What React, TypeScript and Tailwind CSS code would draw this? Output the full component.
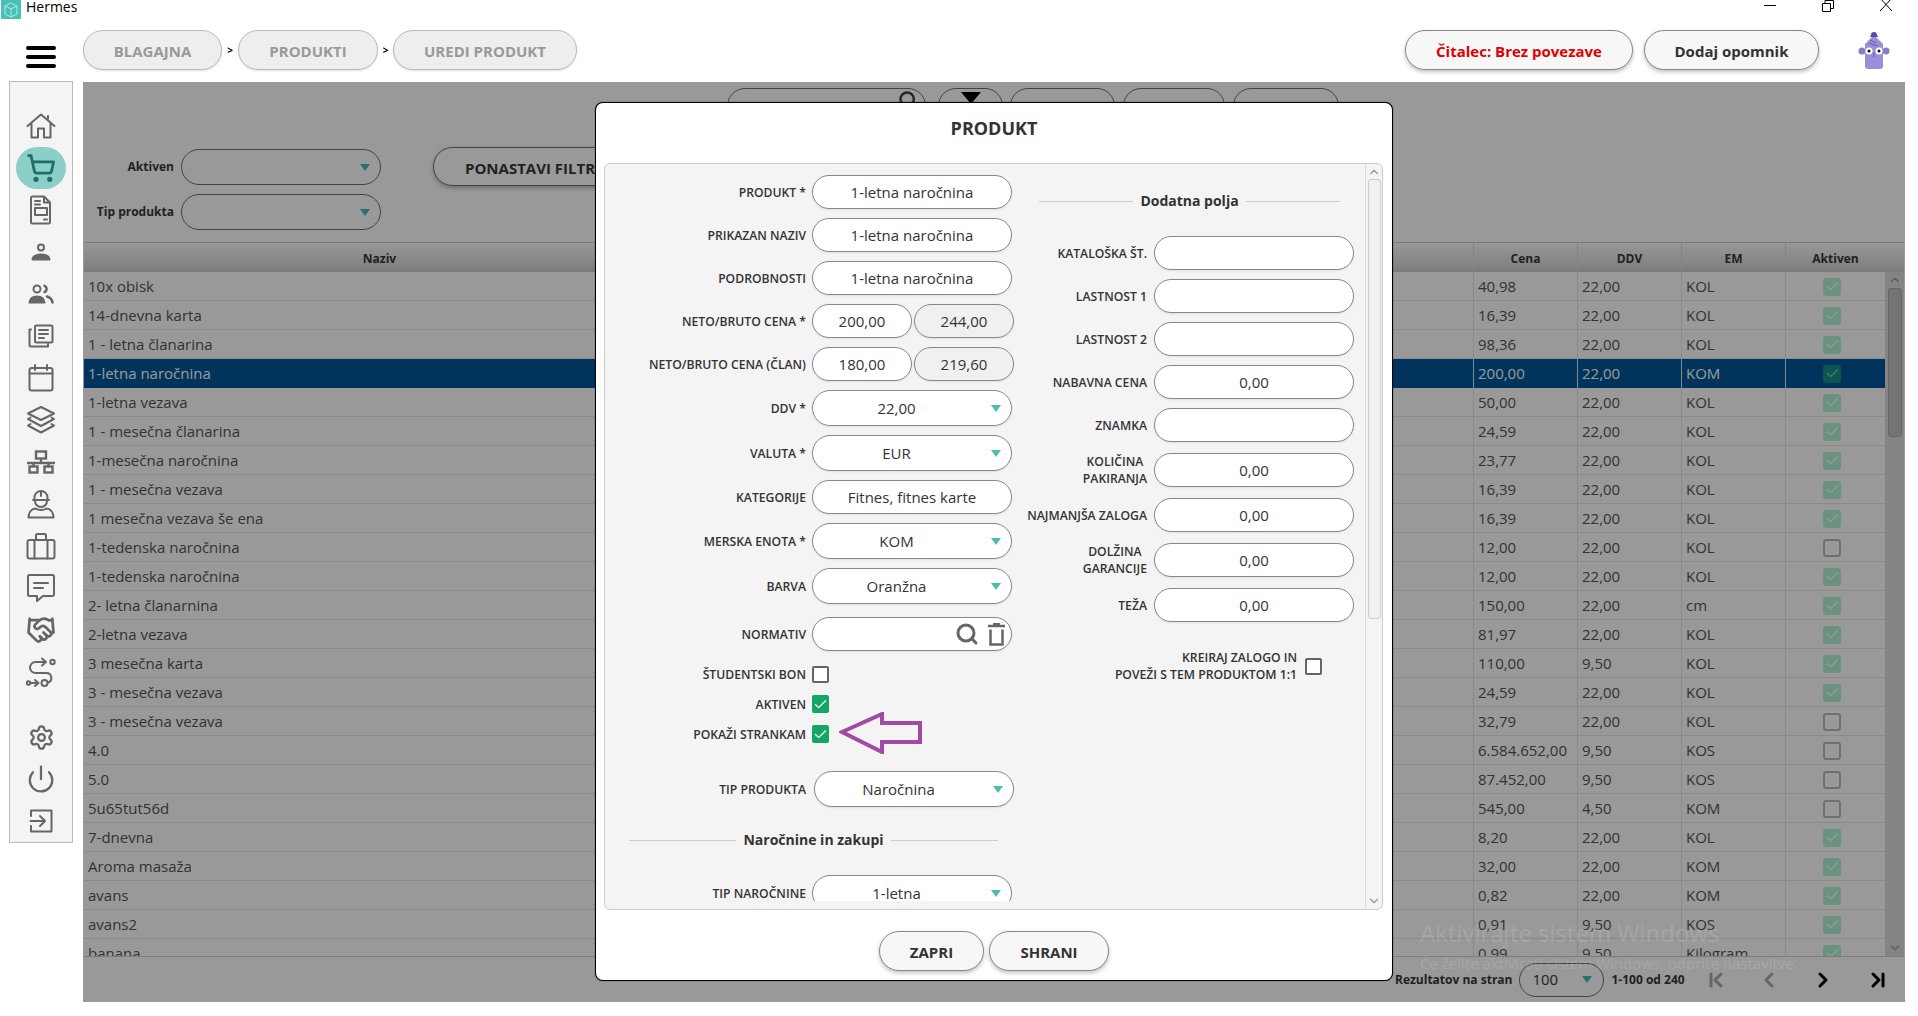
import React from 'react';
import { ChevronFirst, ChevronLast, ChevronLeft, ChevronRight, Handshake, Search, Settings, ShoppingCart, Power, Check, ChevronUp, ChevronDown } from 'lucide-react';

type Row = [string, string, string, string, boolean];

const rows: Row[] = [
  ['10x obisk', '40,98', '22,00', 'KOL', true],
  ['14-dnevna karta', '16,39', '22,00', 'KOL', true],
  ['1 - letna članarina', '98,36', '22,00', 'KOL', true],
  ['1-letna naročnina', '200,00', '22,00', 'KOM', true],
  ['1-letna vezava', '50,00', '22,00', 'KOL', true],
  ['1 - mesečna članarina', '24,59', '22,00', 'KOL', true],
  ['1-mesečna naročnina', '23,77', '22,00', 'KOL', true],
  ['1 - mesečna vezava', '16,39', '22,00', 'KOL', true],
  ['1 mesečna vezava še ena', '16,39', '22,00', 'KOL', true],
  ['1-tedenska naročnina', '12,00', '22,00', 'KOL', false],
  ['1-tedenska naročnina', '12,00', '22,00', 'KOL', true],
  ['2- letna članarnina', '150,00', '22,00', 'cm', true],
  ['2-letna vezava', '81,97', '22,00', 'KOL', true],
  ['3 mesečna karta', '110,00', '9,50', 'KOL', true],
  ['3 - mesečna vezava', '24,59', '22,00', 'KOL', true],
  ['3 - mesečna vezava', '32,79', '22,00', 'KOL', false],
  ['4.0', '6.584.652,00', '9,50', 'KOS', false],
  ['5.0', '87.452,00', '9,50', 'KOS', false],
  ['5u65tut56d', '545,00', '4,50', 'KOM', false],
  ['7-dnevna', '8,20', '22,00', 'KOL', true],
  ['Aroma masaža', '32,00', '22,00', 'KOM', true],
  ['avans', '0,82', '22,00', 'KOM', true],
  ['avans2', '0,91', '9,50', 'KOS', true],
  ['banana', '0,99', '9,50', 'Kilogram', true],
];

const ICON = { fill: 'none', stroke: '#666', strokeWidth: 2, strokeLinecap: 'round', strokeLinejoin: 'round' } as const;

const sideIcons: React.ReactNode[] = [
  <svg key="home" width="30" height="26" viewBox="0 0 30 26" {...ICON}>
    <path d="M1.5 13 15 1.5 28.5 13M5.5 10v14.500h6.500v-9h6v9h6.500V10M22 3v3" />
  </svg>,
  <ShoppingCart key="cart" size={30} color="#1f6d68" strokeWidth={2.2} />,
  <svg key="doc" width="22" height="30" viewBox="0 0 22 30" {...ICON}>
    <path d="M2.500 1.500H14l6 6V27a1.500 1.500 0 0 1-1.500 1.500h-16A1.500 1.500 0 0 1 1 27V3a1.500 1.500 0 0 1 1.500-1.500ZM14 1.500v6h6M5 6h5M5 9.500h5M14 24.500h3" />
    <rect x="5" y="13" width="12" height="7" />
  </svg>,
  <svg key="user" width="20" height="18" viewBox="0 0 20 18" {...ICON}>
    <circle cx="10" cy="4.500" r="3" />
    <path d="M1.500 16.500c.5-3.500 4-5 8.500-5s8 1.500 8.500 5Z" fill="#666" />
  </svg>,
  <svg key="users" width="26" height="20" viewBox="0 0 26 20" {...ICON}>
    <circle cx="9" cy="5" r="3.500" />
    <path d="M1.500 18.500c.5-4 3.500-6 7.500-6s7 2 7.500 6Z" fill="#666" />
    <path d="M16.500 1.800a3.500 3.500 0 0 1 0 6.400M19 12.500c3 .8 5 3 5.500 6" strokeWidth="2.500" />
  </svg>,
  <svg key="papers" width="26" height="24" viewBox="0 0 26 24" {...ICON}>
    <rect x="7" y="1.500" width="17.500" height="17" rx="1.500" />
    <path d="M3 5.500H1.500V21a1.500 1.500 0 0 0 1.500 1.500h17V20M11 6h9M11 10h9M11 14h5" />
  </svg>,
  <svg key="calendar" width="26" height="28" viewBox="0 0 26 28" {...ICON}>
    <rect x="1.500" y="4" width="23" height="22.500" rx="2" />
    <path d="M7 1v5M19 1v5M1.500 9.500h23" />
  </svg>,
  <svg key="layers" width="30" height="30" viewBox="0 0 30 30" {...ICON}>
    <path d="M15 2 28 8.500 15 15 2 8.500Z" />
    <path d="M4.500 12.500 2 14l13 7 13-7-2.500-1.500M4.500 19 2 20.500l13 7 13-7-2.500-1.500" />
  </svg>,
  <svg key="network" width="30" height="24" viewBox="0 0 30 24" {...ICON} strokeWidth="2.400" strokeLinecap="butt" strokeLinejoin="miter">
    <rect x="10" y="1.500" width="10" height="7" />
    <path d="M15 8.500V13M1 13h28M7.500 13v3.500M22.500 13v3.500" />
    <rect x="3.500" y="16.500" width="8" height="6" />
    <rect x="18.500" y="16.500" width="8" height="6" />
  </svg>,
  <svg key="worker" width="28" height="30" viewBox="0 0 28 30" {...ICON}>
    <path d="M7.500 11V8.500a6.500 6.500 0 0 1 13 0V11M6 11h16M14 2v5M8 12a6 6 0 0 0 12 0" />
    <path d="M1.500 28.500c0-5 3-8.500 7-9 3 2 8 2 11 0 4 .5 7 4 7 9Z" />
  </svg>,
  <svg key="briefcase" width="30" height="28" viewBox="0 0 30 28" {...ICON}>
    <rect x="1.500" y="8" width="27" height="18.500" rx="2" />
    <path d="M10 8V3.500A1.500 1.500 0 0 1 11.500 2h7A1.500 1.500 0 0 1 20 3.500V8M8.500 8v18.500M21.500 8v18.500" />
  </svg>,
  <svg key="message" width="30" height="30" viewBox="0 0 30 30" {...ICON}>
    <path d="M3.500 2h23A1.500 1.500 0 0 1 28 3.500v18a1.500 1.500 0 0 1-1.500 1.500H17l-6 5v-5H3.500A1.500 1.500 0 0 1 2 21.500v-18A1.500 1.500 0 0 1 3.500 2Z" />
    <path d="M8 10h14M8 15h9" />
  </svg>,
  <Handshake key="handshake" size={30} color="#666" strokeWidth={2.2} />,
  <svg key="route" width="30" height="30" viewBox="0 0 30 30" {...ICON}>
    <path d="M19 5H9.500a5.500 5.500 0 0 0 0 11h11a5 5 0 0 1 2 9.500M16 1.500 20 5l-4 3.500M4.500 26h7M9 23l3.500 3L9 29" />
    <circle cx="26.500" cy="5" r="2.200" />
    <circle cx="2.500" cy="26" r="1.800" />
    <circle cx="18.500" cy="26" r="3" />
  </svg>,
];

const bottomIcons: React.ReactNode[] = [
  <Settings key="settings" size={27} color="#666" strokeWidth={2} />,
  <Power key="power" size={30} color="#666" strokeWidth={1.8} />,
  <svg key="exit" width="24" height="24" viewBox="0 0 24 24" {...ICON}>
    <path d="M2 7V1.500h20.500v21H2V17M1.500 12h14M11 7l5 5-5 5" />
  </svg>,
];

function Sidebar() {
  return (
    <div className="ml-[9px] mt-[-1px] h-[762px] w-[64px] shrink-0 border border-[#bbb] bg-[#f4f4f4] pt-[23px] flex flex-col items-center">
      {sideIcons.map((icon, i) => (
        <div key={i} className={i === 1 ? 'h-[42px] w-[50px] rounded-full bg-[#8ccfc9] flex items-center justify-center' : 'h-[42px] flex items-center justify-center'}>
          {icon}
        </div>
      ))}
      <div className="h-[23px]" />
      {bottomIcons.map((icon, i) => (
        <div key={i} className="h-[42px] flex items-center justify-center">
          {icon}
        </div>
      ))}
    </div>
  );
}

function TableCheck({ checked, selected }: { checked: boolean; selected: boolean }) {
  if (!checked) return <div className="h-[18px] w-[18px] rounded-[3px] border-2 border-[#bbb]" />;
  return (
    <div className={selected ? 'h-[18px] w-[18px] rounded-[3px] bg-[#168e85] flex items-center justify-center' : 'h-[18px] w-[18px] rounded-[3px] bg-[#b0f5d4] flex items-center justify-center'}>
      <Check size={15} color={selected ? '#8fc4c0' : '#fff'} strokeWidth={2} />
    </div>
  );
}

const COLS = 'grid grid-cols-[592px_798px_104px_104px_104px_99px]';

function Table() {
  return (
    <div className="flex-1 min-h-0 flex flex-col ml-px mr-px overflow-hidden border-b border-[#d0d0d0]">
      <div className={`${COLS} h-[30px] shrink-0 border-y border-[#ccc] bg-gradient-to-b from-[#fdfdfd] to-[#d2d2d2] text-[12px] font-bold text-[#383838] text-center leading-[31px]`}>
        <div className="border-r border-[#ddd]">Naziv</div>
        <div className="border-r border-[#ddd]" />
        <div className="border-r border-[#ddd]">Cena</div>
        <div className="border-r border-[#ddd]">DDV</div>
        <div className="border-r border-[#ddd]">EM</div>
        <div>Aktiven</div>
      </div>
      <div className="flex-1 min-h-0 flex overflow-hidden">
        <div className="w-[1801px] shrink-0">
          {rows.map((r, i) => {
            const selected = i === 3;
            return (
              <div
                key={i}
                className={`${COLS} h-[29px] border-b text-[15px] leading-[29px] ${selected ? 'bg-[#00589a] text-white border-[#00589a]' : 'border-[#e6e6e6] text-[#555]'}`}
              >
                <div className="pl-[4px] border-r border-[#e6e6e6]">{r[0]}</div>
                <div className="border-r border-[#e6e6e6]" />
                <div className="pl-[4px] border-r border-[#e6e6e6]">{r[1]}</div>
                <div className="pl-[4px] border-r border-[#e6e6e6]">{r[2]}</div>
                <div className="pl-[4px] border-r border-[#e6e6e6]">{r[3]}</div>
                <div className="pl-[37px] flex items-center">
                  <TableCheck checked={r[4]} selected={selected} />
                </div>
              </div>
            );
          })}
        </div>
        <div className="w-[19px] shrink-0 bg-[#dcdcdc] flex flex-col items-center">
          <ChevronUp size={14} color="#999" className="mt-[1px]" />
          <div className="mt-[1px] h-[149px] w-[14px] rounded-[3px] bg-[#c2c2c2] border border-[#aaa]" />
          <div className="flex-1" />
          <ChevronDown size={14} color="#999" className="mb-[1px]" />
        </div>
      </div>
    </div>
  );
}

function Caret({ color }: { color: string }) {
  return <div className={`h-0 w-0 border-x-[5px] border-t-[7px] border-x-transparent ${color}`} />;
}

function DarkSelect({ className }: { className: string }) {
  return (
    <div className={`h-[36px] w-[200px] rounded-[18px] border border-[#6e6e6e] flex items-center justify-end pr-[10px] ${className}`}>
      <Caret color="border-t-[#4ab8ad]" />
    </div>
  );
}

function Filters() {
  return (
    <div className="h-[160px] shrink-0 relative">
      <div className="flex pt-[6px] pl-[644px] h-[43px]">
        <div className="h-[37px] w-[199px] rounded-[18px] border border-[#6e6e6e] flex justify-end pr-[7px] pt-[1px]">
          <Search size={20} color="#444" strokeWidth={3} />
        </div>
        <div className="ml-[12px] h-[37px] w-[65px] rounded-[18px] border border-[#6e6e6e] flex justify-center pt-[3px]">
          <div className="h-0 w-0 border-x-[10px] border-t-[12px] border-x-transparent border-t-black" />
        </div>
        <div className="ml-[7px] h-[37px] w-[105px] rounded-[18px] border border-[#6e6e6e]" />
        <div className="ml-[8px] h-[37px] w-[102px] rounded-[18px] border border-[#6e6e6e]" />
        <div className="ml-[8px] h-[37px] w-[106px] rounded-[18px] border border-[#6e6e6e]" />
      </div>
      <div className="flex mt-[24px]">
        <div>
          <div className="flex items-center">
            <div className="w-[91px] text-right text-[12px] font-bold text-[#383838]">Aktiven</div>
            <DarkSelect className="ml-[7px]" />
          </div>
          <div className="flex items-center mt-[9px]">
            <div className="w-[91px] text-right text-[12px] font-bold text-[#383838]">Tip produkta</div>
            <DarkSelect className="ml-[7px]" />
          </div>
        </div>
        <div className="ml-[52px] mt-[-2px] h-[39px] w-[240px] rounded-[20px] border border-[#6e6e6e] shadow-[0_2px_4px_rgba(0,0,0,0.3)] pl-[31px] text-[15px] font-bold leading-[40px] text-[#383838]">
          PONASTAVI FILTRE
        </div>
      </div>
    </div>
  );
}

function Pagination() {
  return (
    <div className="h-[45px] shrink-0 flex items-center text-[12px] font-bold text-[#383838]">
      <div className="ml-[1312px]">Rezultatov na stran</div>
      <div className="ml-[7px] h-[34px] w-[85px] rounded-[17px] border border-[#6e6e6e] flex items-center justify-between pl-[12px] pr-[11px] text-[15px] font-normal">
        100
        <Caret color="border-t-[#4ab8ad]" />
      </div>
      <div className="ml-[7px] w-[72px] whitespace-nowrap">1-100 od 240</div>
      <ChevronFirst size={24} color="#aaa" strokeWidth={3} className="ml-[21px]" />
      <ChevronLeft size={24} color="#aaa" strokeWidth={3} className="ml-[29px]" />
      <ChevronRight size={24} color="#000" strokeWidth={3} className="ml-[30px]" />
      <ChevronLast size={24} color="#000" strokeWidth={3} className="ml-[31px]" />
    </div>
  );
}

function Label({ width, children }: { width: string; children: React.ReactNode }) {
  return (
    <div className={`${width} shrink-0 flex justify-end`}>
      <div className="text-center text-[12.2px] font-semibold leading-[17px] text-[#333]">{children}</div>
    </div>
  );
}

const FIELD = 'border border-[#888] bg-white text-[15px] text-[#333] shadow-[0_1px_2px_rgba(0,0,0,0.08)] flex items-center';

function TextBox({ value }: { value?: string }) {
  return <div className={`${FIELD} h-[34px] w-[200px] rounded-[17px] justify-center`}>{value}</div>;
}

function HalfBox({ value, disabled }: { value: string; disabled?: boolean }) {
  return (
    <div className={`${FIELD} h-[34px] w-[100px] rounded-[17px] justify-center ${disabled ? '!bg-[#f0f0f0]' : ''}`}>{value}</div>
  );
}

function SelectBox({ value }: { value: string }) {
  return (
    <div className={`${FIELD} h-[36px] w-[200px] rounded-[18px] pr-[10px]`}>
      <div className="flex-1 text-center pr-[11px]">{value}</div>
      <Caret color="border-t-[#4dbdb0]" />
    </div>
  );
}

function Box({ checked }: { checked?: boolean }) {
  if (checked) {
    return (
      <div className="h-[18px] w-[17px] rounded-[2px] bg-[#14a763] flex items-center justify-center">
        <Check size={15} color="#fff" strokeWidth={2} />
      </div>
    );
  }
  return <div className="h-[17px] w-[17px] rounded-[2px] border-2 border-[#666] bg-white" />;
}

function LeftField({ label, className, children }: { label: string; className?: string; children: React.ReactNode }) {
  return (
    <div className={`flex items-center ${className ?? ''}`}>
      <Label width="w-[201px]">{label}</Label>
      <div className="ml-[6px] flex gap-[2px]">{children}</div>
    </div>
  );
}

function RightField({ label, value, className }: { label: React.ReactNode; value?: string; className?: string }) {
  return (
    <div className={`flex items-center ${className ?? ''}`}>
      <Label width="w-[128px]">{label}</Label>
      <div className="ml-[7px]">
        <TextBox value={value} />
      </div>
    </div>
  );
}

function Heading({ text, className }: { text: string; className: string }) {
  return (
    <div className={`flex items-center gap-[7px] ${className}`}>
      <div className="h-px flex-1 bg-[#ccc]" />
      <div className="text-[14px] font-bold text-[#333] leading-[20px]">{text}</div>
      <div className="h-px flex-1 bg-[#ccc]" />
    </div>
  );
}

function Modal() {
  return (
    <div className="h-[879px] w-[798px] rounded-lg border border-black shadow-[0_0_1px_#000] bg-white flex flex-col">
      <div className="h-[60px] shrink-0 pt-[13px] text-center text-[18px] font-bold leading-[24px] text-[#333]">PRODUKT</div>
      <div className="relative ml-[8px] mr-[9px] h-[747px] shrink-0 rounded-[6px] border border-[#ccc] bg-[#f4f4f4] flex">
        <div className="h-[737px] flex-1 overflow-hidden flex">
          <div className="w-[414px] shrink-0 pt-[11px]">
            <LeftField label="PRODUKT *"><TextBox value="1-letna naročnina" /></LeftField>
            <LeftField label="PRIKAZAN NAZIV" className="mt-[9px]"><TextBox value="1-letna naročnina" /></LeftField>
            <LeftField label="PODROBNOSTI" className="mt-[9px]"><TextBox value="1-letna naročnina" /></LeftField>
            <LeftField label="NETO/BRUTO CENA *" className="mt-[9px]">
              <HalfBox value="200,00" />
              <HalfBox value="244,00" disabled />
            </LeftField>
            <LeftField label="NETO/BRUTO CENA (ČLAN)" className="mt-[9px]">
              <HalfBox value="180,00" />
              <HalfBox value="219,60" disabled />
            </LeftField>
            <LeftField label="DDV *" className="mt-[9px]"><SelectBox value="22,00" /></LeftField>
            <LeftField label="VALUTA *" className="mt-[9px]"><SelectBox value="EUR" /></LeftField>
            <LeftField label="KATEGORIJE" className="mt-[9px]"><TextBox value="Fitnes, fitnes karte" /></LeftField>
            <LeftField label="MERSKA ENOTA *" className="mt-[9px]"><SelectBox value="KOM" /></LeftField>
            <LeftField label="BARVA" className="mt-[9px]"><SelectBox value="Oranžna" /></LeftField>
            <LeftField label="NORMATIV" className="mt-[13px]">
              <div className={`${FIELD} h-[34px] w-[200px] rounded-[17px] justify-end pr-[6px] gap-[9px]`}>
                <Search size={24} color="#666" strokeWidth={3} />
                <svg width="17" height="23" viewBox="0 0 17 23" fill="none" stroke="#666" strokeWidth="2.500">
                  <path d="M0 3h17M5 1h7M2.500 6.500v15h12v-15" />
                </svg>
              </div>
            </LeftField>
            <LeftField label="ŠTUDENTSKI BON" className="mt-[15px]"><Box /></LeftField>
            <LeftField label="AKTIVEN" className="mt-[12px]"><Box checked /></LeftField>
            <LeftField label="POKAŽI STRANKAM" className="mt-[12px]"><Box checked /></LeftField>
            <LeftField label="TIP PRODUKTA" className="mt-[28px]">
              <div className="ml-[2px]"><SelectBox value="Naročnina" /></div>
            </LeftField>
            <Heading text="Naročnine in zakupi" className="mt-[23px] ml-[24px] w-[369px]" />
            <LeftField label="TIP NAROČNINE" className="mt-[25px]"><SelectBox value="1-letna" /></LeftField>
          </div>
          <div className="flex-1 pt-[27px]">
            <Heading text="Dodatna polja" className="ml-[20px] w-[301px]" />
            <RightField label="KATALOŠKA ŠT." className="mt-[25px]" />
            <RightField label="LASTNOST 1" className="mt-[9px]" />
            <RightField label="LASTNOST 2" className="mt-[9px]" />
            <RightField label="NABAVNA CENA" value="0,00" className="mt-[9px]" />
            <RightField label="ZNAMKA" className="mt-[9px]" />
            <RightField label={<>KOLIČINA<br />PAKIRANJA</>} value="0,00" className="mt-[11px]" />
            <RightField label="NAJMANJŠA ZALOGA" value="0,00" className="mt-[11px]" />
            <RightField label={<>DOLŽINA<br />GARANCIJE</>} value="0,00" className="mt-[11px]" />
            <RightField label="TEŽA" value="0,00" className="mt-[11px]" />
            <div className="mt-[27px] w-[303px] flex items-center justify-end">
              <div className="text-right text-[12.2px] font-semibold leading-[17px] text-[#333] whitespace-nowrap">
                KREIRAJ ZALOGO IN<br />POVEŽI S TEM PRODUKTOM 1:1
              </div>
              <div className="ml-[8px]"><Box /></div>
            </div>
          </div>
        </div>
        <div className="w-[17px] shrink-0 border-l border-[#ddd] flex flex-col items-center rounded-r-[6px]">
          <ChevronUp size={14} color="#999" className="mt-[1px]" />
          <div className="h-[440px] w-[13px] rounded-[3px] border border-[#ccc] bg-[#f0f0f0]" />
          <div className="flex-1" />
          <ChevronDown size={14} color="#999" className="mb-[1px]" />
        </div>
        <svg className="absolute left-[234px] top-[548px]" width="84" height="42" viewBox="0 0 84 42" fill="none" stroke="#a349a4" strokeWidth="4">
          <path d="M3 20 43 2v9h38v19H43v10Z" />
        </svg>
      </div>
      <div className="flex-1 flex justify-center gap-[5px] pt-[21px]">
        <div className="h-[40px] w-[105px] rounded-[20px] border border-[#888] bg-[#f7f7f7] shadow-[0_2px_4px_rgba(0,0,0,0.25)] text-center text-[15px] font-bold leading-[40px] text-[#333]">ZAPRI</div>
        <div className="h-[40px] w-[120px] rounded-[20px] border border-[#888] bg-[#f7f7f7] shadow-[0_2px_4px_rgba(0,0,0,0.25)] text-center text-[15px] font-bold leading-[40px] text-[#333]">SHRANI</div>
      </div>
    </div>
  );
}

function Avatar() {
  return (
    <svg width="32" height="38" viewBox="0 0 32 38">
      <circle cx="4" cy="19" r="3.500" fill="#8a7cc8" />
      <circle cx="28" cy="19" r="3.500" fill="#8a7cc8" />
      <path d="M7 12 16 3l9 9v22a3 3 0 0 1-3 3H10a3 3 0 0 1-3-3Z" fill="#9c8fd9" />
      <path d="M13 3a3 3 0 0 1 6 0l1 2h-8Z" fill="#5b4a9e" />
      <circle cx="11" cy="19" r="3.500" fill="#fff" />
      <circle cx="21" cy="19" r="3.500" fill="#fff" />
      <circle cx="11" cy="19" r="1.500" fill="#111" />
      <circle cx="21" cy="19" r="1.500" fill="#111" />
      <path d="M16 20v5M11 11l5 2 4 1M12 8l6 3" stroke="#5b4a9e" strokeWidth="0.800" fill="none" />
    </svg>
  );
}

function Logo() {
  return (
    <div className="ml-px h-[19px] w-[20px] bg-[#45c1b5] flex items-center justify-center">
      <svg width="14" height="16" viewBox="0 0 14 16" fill="none" stroke="#b9e9e3" strokeWidth="1">
        <path d="M7 1 13 4v8l-6 3-6-3V4ZM1 4l6 3 6-3M7 7v8" />
      </svg>
    </div>
  );
}

function Crumb({ text, width }: { text: string; width: string }) {
  return (
    <div className={`${width} h-[40px] rounded-[20px] border border-[#bbb] bg-[#eee] text-center text-[15px] font-bold leading-[40px] text-[#999] shadow-[0_1px_2px_rgba(0,0,0,0.12)]`}>
      {text}
    </div>
  );
}

export default function App() {
  return (
    <div className="relative h-screen w-full overflow-hidden bg-white font-['Open_Sans',sans-serif]">
      <div className="h-[30px] flex items-start overflow-hidden">
        <Logo />
        <div className="ml-[5px] mt-[-3px] text-[14px] leading-[20px] text-black">Hermes</div>
        <div className="flex-1" />
        <div className="mt-[5px] h-px w-[12px] bg-black" />
        <svg className="ml-[46px]" width="12" height="12" viewBox="0 0 12 12" fill="none" stroke="#000">
          <path d="M.5 3.500h8v8h-8ZM3 3.500V.5h8.500v8H8.500" />
        </svg>
        <div className="ml-[46px] mr-[26px] mt-[-2px]">
          <svg width="12" height="13" viewBox="0 0 12 13" stroke="#000"><path d="M0 0 12 13M12 0 0 13" /></svg>
        </div>
      </div>
      <div className="h-[52px] flex items-start">
        <div className="ml-[26px] mt-[16px] w-[30px] flex flex-col gap-[5px]">
          <div className="h-[4px] rounded-full bg-black" />
          <div className="h-[4px] rounded-full bg-black" />
          <div className="h-[4px] rounded-full bg-black" />
        </div>
        <div className="ml-[27px] flex items-center">
          <Crumb text="BLAGAJNA" width="w-[139px]" />
          <div className="w-[16px] text-center text-[10px] font-bold">&gt;</div>
          <Crumb text="PRODUKTI" width="w-[140px]" />
          <div className="w-[15px] text-center text-[10px] font-bold">&gt;</div>
          <Crumb text="UREDI PRODUKT" width="w-[184px]" />
        </div>
        <div className="flex-1" />
        <div className="h-[40px] w-[228px] rounded-[20px] border border-[#888] bg-[#f7f7f7] shadow-[0_2px_4px_rgba(0,0,0,0.25)] text-center text-[15px] font-bold leading-[40px] text-[#e00000]">Čitalec: Brez povezave</div>
        <div className="ml-[11px] h-[40px] w-[175px] rounded-[20px] border border-[#888] bg-[#f7f7f7] shadow-[0_2px_4px_rgba(0,0,0,0.25)] text-center text-[15px] font-bold leading-[40px] text-[#333]">Dodaj opomnik</div>
        <div className="ml-[39px] mr-[28px] mt-[2px]"><Avatar /></div>
      </div>
      <div className="flex items-start">
        <Sidebar />
        <div className="relative ml-[10px] h-[920px] w-[1822px] bg-white flex flex-col overflow-hidden">
          <Filters />
          <Table />
          <Pagination />
          <div className="absolute inset-0 bg-black/40 flex justify-center pt-[20px]">
            <Modal />
          </div>
          <div className="absolute left-[1337px] top-[836px] text-[24px] leading-[30px] text-white/15 whitespace-nowrap pointer-events-none">Aktivirajte sistem Windows</div>
          <div className="absolute left-[1337px] top-[871px] text-[15px] leading-[20px] text-white/15 whitespace-nowrap pointer-events-none">Če želite aktivirati sistem Windows, odprite nastavitve.</div>
        </div>
      </div>
    </div>
  );
}
